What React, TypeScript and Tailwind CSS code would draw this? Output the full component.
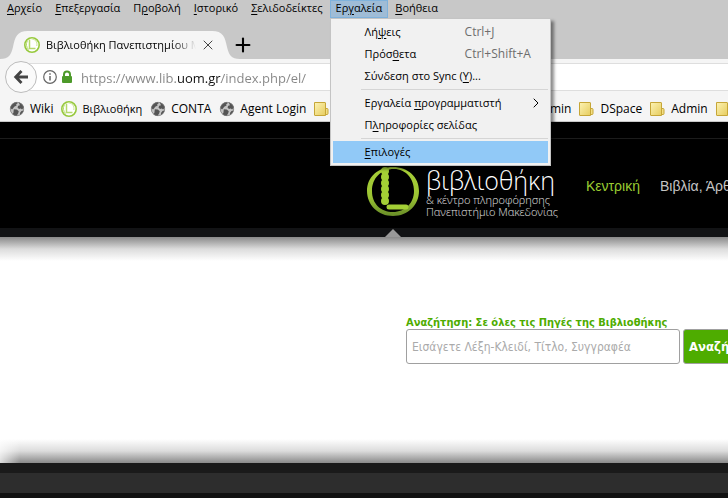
import { LuPlus, LuX, LuChevronRight } from 'react-icons/lu';

type MenuLabel = [before: string, key: string, after: string];

const menus: { label: MenuLabel; open?: boolean }[] = [
  { label: ['', 'Α', 'ρχείο'] },
  { label: ['', 'Ε', 'πεξεργασία'] },
  { label: ['Π', 'ρ', 'οβολή'] },
  { label: ['', 'Ι', 'στορικό'] },
  { label: ['', 'Σ', 'ελιδοδείκτες'] },
  { label: ['Ερ', 'γ', 'αλεία'], open: true },
  { label: ['', 'Β', 'οήθεια'] },
];

const toolItems: { label: MenuLabel; shortcut?: string; submenu?: boolean; active?: boolean }[][] = [
  [
    { label: ['Λή', 'ψ', 'εις'], shortcut: 'Ctrl+J' },
    { label: ['Πρόσ', 'θ', 'ετα'], shortcut: 'Ctrl+Shift+A' },
    { label: ['Σύνδεση στο Sync (', 'Y', ')...'] },
  ],
  [
    { label: ['Εργαλεία ', 'π', 'ρογραμματιστή'], submenu: true },
    { label: ['Π', 'λ', 'ηροφορίες σελίδας'] },
  ],
  [{ label: ['', 'Ε', 'πιλογές'], active: true }],
];

function Mnemonic({ label }: { label: MenuLabel }) {
  return (
    <span className="whitespace-pre text-[11px]">
      {label[0]}
      <span className="underline underline-offset-2">{label[1]}</span>
      {label[2]}
    </span>
  );
}

function LibraryIcon() {
  return (
    <svg className="h-4 w-4 shrink-0" viewBox="0 0 16 16" fill="none">
      <circle cx="8" cy="8" r="7.200" fill="#fff" stroke="#97c93d" strokeWidth="1.600" />
      <path d="M5.500 2.500v9h6" stroke="#b5d96b" strokeWidth="1.500" />
      <path d="M7.500 2c4 0 6 3 5.300 7" stroke="#cbe597" strokeWidth="1" />
      <path d="M3.300 4c-1.500 3-1 6 1.200 8.500" stroke="#b5d96b" strokeWidth="1" />
    </svg>
  );
}

function GlobeIcon() {
  return (
    <svg className="h-4 w-4 shrink-0" viewBox="0 0 16 16">
      <circle cx="8" cy="8" r="7" fill="#c4c4c4" />
      <path
        d="M1.300 7c.5-3 2.800-5.500 6.200-6l1.200 1.300-1.500 1 .4 1.200-2.400 1.200L4 7.600l-1 .9zM9.600 1.200c2.600.5 4.800 2.500 5.300 5.300l-1.800 2-1.300-1-1.800.5-1.500-1.500.7-1.800 1.800-.5zM4.800 8.200l3 .3 2 1.800-.6 2-1.700 2.600c-1.500-.1-3-.7-4.100-1.700l1-1.500zM12.500 10l2-.5c-.5 2-1.800 3.800-3.600 4.700l.2-2.500z"
        fill="#555"
      />
      <circle cx="8" cy="8" r="6.700" fill="none" stroke="#777" strokeWidth=".7" />
    </svg>
  );
}

function FolderIcon() {
  return (
    <svg className="h-4 w-4 shrink-0" viewBox="0 0 16 16">
      <defs>
        <linearGradient id="folder" x1="0" y1="0" x2="1" y2="1">
          <stop offset="0" stopColor="#fdf3b4" />
          <stop offset="1" stopColor="#e6cc5e" />
        </linearGradient>
      </defs>
      <path d="M10 7.500h3q1 0 1 1v4q0 1-1 1h-3z" fill="#f3df85" stroke="#c6a637" />
      <path d="M.5 1.500h10.500q.5 0 .5.500v12.500H1q-.5 0-.5-.5z" fill="url(#folder)" stroke="#c6a637" />
    </svg>
  );
}

const leftBookmarks = [
  { title: 'Wiki', icon: <GlobeIcon /> },
  { title: 'Βιβλιοθήκη', icon: <LibraryIcon />, greek: true },
  { title: 'CONTA', icon: <GlobeIcon /> },
  { title: 'Agent Login', icon: <GlobeIcon /> },
  { title: '', icon: <FolderIcon /> },
];

const rightBookmarks = [
  { title: 'Admin', icon: <FolderIcon /> },
  { title: 'DSpace', icon: <FolderIcon /> },
  { title: 'Admin', icon: <FolderIcon /> },
  { title: '', icon: <FolderIcon /> },
];

function Bookmark({ title, icon, greek }: { title: string; icon: React.ReactNode; greek?: boolean }) {
  return (
    <button aria-label={title || 'Φάκελος'} className="flex shrink-0 items-center gap-[5px]">
      {icon}
      {title && <span className={greek ? 'text-[11px]' : 'text-xs'}>{title}</span>}
    </button>
  );
}

function ToolsMenu() {
  return (
    <div className="absolute left-0 top-full z-20 w-[221px] border border-[#c4c4c4] bg-[#f1f1f1] p-[2px] shadow-[3px_3px_3px_rgba(0,0,0,0.45)]">
      {toolItems.map((group, i) => (
        <div key={i}>
          {i > 0 && <div className="my-[2px] ml-7 h-px bg-[#d5d5d5]" />}
          {group.map((item) => (
            <button
              key={item.label.join('')}
              className={
                item.active
                  ? 'flex h-[22px] w-full items-center bg-[#91c9f7] pl-8 text-left'
                  : 'flex h-[22px] w-full items-center pl-8 text-left'
              }
            >
              <span className={item.shortcut ? 'w-[100px]' : 'flex-1'}>
                <Mnemonic label={item.label} />
              </span>
              {item.shortcut && <span className="text-[#6d6d6d]">{item.shortcut}</span>}
              {item.submenu && <LuChevronRight className="mr-1 h-4 w-4" strokeWidth={1.500} />}
            </button>
          ))}
        </div>
      ))}
    </div>
  );
}

function MenuBar() {
  return (
    <nav className="flex h-[18px] gap-px pl-px">
      {menus.map(({ label, open }) => (
        <div key={label.join('')} className="relative flex">
          <button
            className={
              open
                ? 'flex items-center border border-[#7fb2dc] bg-[#9fbcd6] px-[5px] pb-[2px]'
                : 'flex items-center px-[6px] pb-[2px]'
            }
          >
            <Mnemonic label={label} />
          </button>
          {open && <ToolsMenu />}
        </div>
      ))}
    </nav>
  );
}

function TabStrip() {
  return (
    <div className="flex h-[41px] items-end">
      <div className="relative flex h-7 w-[240px] items-center pl-6 pr-6">
        <svg className="absolute inset-0 h-full w-full" viewBox="0 0 240 28" preserveAspectRatio="none">
          <path
            d="M0 28C9 28 11 24 13 16C15 6 17 0 28 0H212C223 0 225 6 227 16C229 24 231 28 240 28Z"
            fill="#f5f5f5"
          />
        </svg>
        <div className="relative flex w-full items-center">
          <LibraryIcon />
          <span className="ml-[6px] flex-1 overflow-hidden whitespace-nowrap text-[11px] [mask-image:linear-gradient(90deg,#000_85%,transparent)]">
            Βιβλιοθήκη Πανεπιστημίου Μακεδονίας
          </span>
          <button aria-label="Κλείσιμο καρτέλας" className="ml-1">
            <LuX className="h-4 w-4 text-[#444]" strokeWidth={1.500} />
          </button>
        </div>
      </div>
      <button aria-label="Νέα καρτέλα" className="-ml-2 flex h-7 items-center">
        <LuPlus className="h-[22px] w-[22px]" strokeWidth={2.300} />
      </button>
    </div>
  );
}

function AddressBar() {
  return (
    <div className="flex h-9 items-center bg-[#f5f5f5] pl-[5px]">
      <button
        aria-label="Πίσω"
        className="z-10 flex h-8 w-8 shrink-0 items-center justify-center rounded-full border border-[#bcbcbc] bg-[#fafafa]"
      >
        <svg className="h-4 w-4" viewBox="0 0 16 16" fill="none" stroke="#444" strokeWidth="2.800">
          <path d="M8.500 2L2.700 8l5.800 6M3 8h12" />
        </svg>
      </button>
      <div className="-ml-2 flex h-7 flex-1 items-center border-y border-[#dedede] bg-white pl-[14px]">
        <svg className="h-[14px] w-[14px]" viewBox="0 0 14 14" fill="none" stroke="#666">
          <circle cx="7" cy="7" r="6.300" strokeWidth="1.200" />
          <path d="M7 6v4.500M7 3.200v1.500" strokeWidth="1.500" />
        </svg>
        <svg className="ml-1 mr-2 h-[14px] w-3" viewBox="0 0 12 14" fill="none">
          <path d="M3 7V4.500a3 3 0 0 1 6 0V7" stroke="#4d9a2a" strokeWidth="2" />
          <rect x="1" y="6" width="10" height="7" rx="1" fill="#4d9a2a" />
        </svg>
        {/* the registered domain is darker than the rest of the address */}
        <input
          aria-label="Διεύθυνση"
          readOnly
          value="https://www.lib.uom.gr/index.php/el/"
          className="min-w-0 flex-1 bg-[linear-gradient(90deg,#858585_95px,#111_95px,#111_140px,#858585_140px)] bg-clip-text pt-1 text-[13px] text-transparent outline-none"
        />
      </div>
    </div>
  );
}

function BookmarksBar() {
  return (
    <div className="flex h-[27px] items-center overflow-hidden border-b border-[#c8c8c8] bg-[#f5f5f5] pt-[2px]">
      <div className="flex w-[514px] shrink-0 gap-2 pl-[9px]">
        {leftBookmarks.map((b, i) => (
          <Bookmark key={i} {...b} />
        ))}
      </div>
      <div className="flex gap-2">
        {rightBookmarks.map((b, i) => (
          <Bookmark key={i} {...b} />
        ))}
      </div>
    </div>
  );
}

function LibraryLogo() {
  return (
    <a href="#" className="flex w-[192px] shrink-0 items-center gap-[6px]">
      <svg className="h-[52px] w-[54px] shrink-0" viewBox="0 0 54 52" fill="none">
        <defs>
          <linearGradient id="ring" x1="0" y1="0" x2="0" y2="1">
            <stop offset="0" stopColor="#a8cf38" />
            <stop offset=".6" stopColor="#9cc433" />
            <stop offset="1" stopColor="#688c28" />
          </linearGradient>
        </defs>
        <path
          fillRule="evenodd"
          d="M27 1C42 1 53 11 53 25S42 50 27 50S1 39 1 25S12 1 27 1ZM28 3C15 3 6 12 6 25S15 46 27 46S48 37 48 25S40 3 28 3Z"
          fill="url(#ring)"
        />
        <path d="M19 5v30" stroke="#a3cf35" strokeWidth="5" />
        <path d="M19 5v31" stroke="#a3cf35" strokeWidth="8" strokeLinecap="round" strokeDasharray="0 6" />
        <path d="M23 41h17" stroke="#a3cf35" strokeWidth="5" strokeLinecap="round" />
      </svg>
      <span className="flex flex-col whitespace-nowrap text-[11px] font-light leading-3 text-[#e0e0e0]">
        <span className="text-[25px] leading-7 text-white">βιβλιοθήκη</span>
        <span>&amp; κέντρο πληροφόρησης</span>
        <span>Πανεπιστήμιο Μακεδονίας</span>
      </span>
    </a>
  );
}

function SiteHeader() {
  return (
    <header className="relative border-b-[9px] border-[#121315] bg-black pt-4">
      <div className="flex h-[90px] items-center overflow-hidden border-t border-[#1c1c1c] pl-[366px] pt-4">
        <LibraryLogo />
        <nav className="ml-7 flex shrink-0 gap-5 whitespace-nowrap pb-3 font-['Liberation_Sans',sans-serif] text-sm">
          <a href="#" className="text-[#9acd32]">Κεντρική</a>
          <a href="#" className="text-[#c4c4c4]">Βιβλία, Άρθρα</a>
        </nav>
      </div>
      <svg className="absolute left-[385px] top-full h-[9px] w-4" viewBox="0 0 16 9">
        <path d="M8 1l8 8H0z" fill="#999" />
      </svg>
    </header>
  );
}

function SearchSection() {
  return (
    <main className="bg-white font-['DejaVu_Sans_Condensed','DejaVu_Sans',sans-serif]">
      <div className="h-6 bg-linear-to-b from-[#8a8a8a] via-[#dcdcdc] to-white" />
      <form className="overflow-hidden pb-[75px] pl-[406px] pt-14">
        <label htmlFor="search" className="block whitespace-nowrap text-[11px] leading-3 font-bold text-[#4eac00]">
          Αναζήτηση: Σε όλες τις Πηγές της Βιβλιοθήκης
        </label>
        <div className="flex gap-[3px]">
          <input
            id="search"
            placeholder="Εισάγετε Λέξη-Κλειδί, Τίτλο, Συγγραφέα"
            className="h-[35px] w-[274px] shrink-0 rounded-[3px] border border-[#a0a0a0] px-[5px] text-xs placeholder:text-[#aaa]"
          />
          <button
            type="button"
            className="h-[35px] shrink-0 rounded-[3px] border border-[#a0a0a0] bg-[#4eac00] px-[5px] text-[13px] font-bold text-white"
          >
            Αναζήτηση
          </button>
        </div>
      </form>
      <div className="flex h-6 bg-linear-to-t from-[#8a8a8a] via-[#dcdcdc] to-white">
        <div className="w-5 bg-linear-to-r from-white/70 to-transparent" />
      </div>
    </main>
  );
}

export default function App() {
  return (
    <div className="min-h-screen overflow-hidden bg-[#111] font-['Open_Sans','Noto_Sans',sans-serif] text-xs text-black">
      <div className="bg-[#c8c8c8]">
        <MenuBar />
        <TabStrip />
        <AddressBar />
        <BookmarksBar />
      </div>
      <SiteHeader />
      <SearchSection />
      <footer className="h-[30px] border-t-[10px] border-[#1a1a1a] bg-[#2d2d2d]" />
    </div>
  );
}
